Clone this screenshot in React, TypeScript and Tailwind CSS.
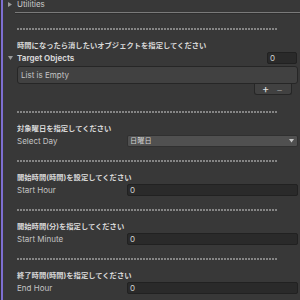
import React from "react";

function Dashed({ cls }: { cls: string }) {
  return (
    <div
      className={`ml-[14px] w-[261px] h-[2px] shrink-0 bg-[repeating-linear-gradient(90deg,#858585_0px,#858585_2px,transparent_2px,transparent_3px)] ${cls}`}
    />
  );
}

function Header({ text }: { text: string }) {
  return (
    <div className="mt-[10px] h-[12px] shrink-0 flex items-center pl-[14px] font-bold text-[7.3px] text-[#d8d8d8] whitespace-nowrap">
      {text}
    </div>
  );
}

function IntRow({ label }: { label: string }) {
  return (
    <div className="h-[12px] shrink-0 flex items-center">
      <div className="w-[124px] pl-[14px] whitespace-nowrap">{label}</div>
      <div className="flex-1 mr-[2px] h-[12px] bg-[#2a2a2a] border border-[#212121] rounded-[2px] flex items-center pl-[2px] text-[#d2d2d2]">
        0
      </div>
    </div>
  );
}

export default function App() {
  return (
    <div className="w-[300px] h-[300px] overflow-hidden bg-[#383838] flex font-['Inter','Noto_Sans_CJK_JP',sans-serif] text-[8px] text-[#c4c4c4] leading-none">
      <div className="w-px bg-[#2e2e2e] shrink-0" />
      <div className="w-[2px] bg-[#7e6fd1] shrink-0" />
      <div className="flex-1 flex flex-col min-w-0">
        {/* Utilities foldout */}
        <div className="mt-[-4px] h-[16px] shrink-0 flex items-center">
          <svg className="ml-[5px]" width="4" height="5" viewBox="0 0 4 5">
            <path d="M0 0 L4 2.5 L0 5 Z" fill="#9a9a9a" />
          </svg>
          <span className="ml-[5px] text-[#c8c8c8]">Utilities</span>
        </div>
        <div className="ml-[12px] h-px shrink-0 bg-[#7a7a7a]" />
        <div className="ml-[12px] h-px shrink-0 bg-[#2e2e2e]" />

        <Dashed cls="mt-[14px]" />
        <Header text="時間になったら消したいオブジェクトを指定してください" />

        {/* Target Objects */}
        <div className="h-[12px] shrink-0 flex items-center">
          <svg className="ml-[5px]" width="5" height="4" viewBox="0 0 5 4">
            <path d="M0 0 L5 0 L2.5 4 Z" fill="#9a9a9a" />
          </svg>
          <span className="ml-[4px] font-bold text-[#d4d4d4]">Target Objects</span>
          <div className="flex-1" />
          <div className="w-[30px] h-[12px] mr-[3px] bg-[#2a2a2a] border border-[#212121] rounded-[2px] flex items-center pl-[2px] text-[#d2d2d2]">
            0
          </div>
        </div>

        <div className="ml-[14px] mr-[2px] mt-[2px] h-[18px] shrink-0 bg-[#414141] border border-[#262626] rounded-[3px] flex items-center pl-[3px] text-[#c4c4c4]">
          List is Empty
        </div>
        <div className="self-end mr-[8px] w-[38px] h-[11px] shrink-0 bg-[#414141] border border-t-0 border-[#262626] rounded-b-[3px] flex items-center">
          <span className="ml-[7px] text-[11px] text-[#e0e0e0] leading-none">+</span>
          <span className="ml-[7px] text-[10px] text-[#8a8a8a] leading-none">−</span>
        </div>

        <Dashed cls="mt-[16px]" />
        <Header text="対象曜日を指定してください" />
        <div className="h-[12px] shrink-0 flex items-center">
          <div className="w-[124px] pl-[14px] whitespace-nowrap">Select Day</div>
          <div className="flex-1 mr-[2px] h-[12px] bg-[#505050] border border-[#303030] rounded-[2px] flex items-center pl-[2px] text-[#d2d2d2] text-[7.2px]">
            <span>日曜日</span>
            <div className="flex-1" />
            <svg className="mr-[3px]" width="5" height="4" viewBox="0 0 5 4">
              <path d="M0 0 L5 0 L2.5 3.5 Z" fill="#c8c8c8" />
            </svg>
          </div>
        </div>

        <Dashed cls="mt-[13px]" />
        <Header text="開始時間(時間)を設定してください" />
        <IntRow label="Start Hour" />

        <Dashed cls="mt-[13px]" />
        <Header text="開始時間(分)を指定してください" />
        <IntRow label="Start Minute" />

        <Dashed cls="mt-[13px]" />
        <Header text="終了時間(時間)を指定してください" />
        <IntRow label="End Hour" />
      </div>
    </div>
  );
}
